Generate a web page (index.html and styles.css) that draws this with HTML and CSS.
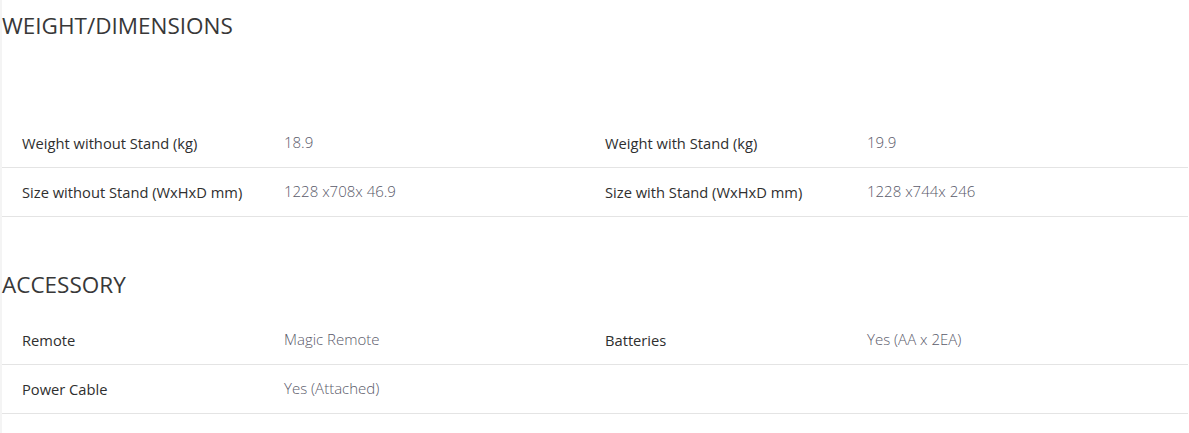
FILE: index.html
```html
<!DOCTYPE html>
<html lang="en">
<head>
<meta charset="utf-8">
<title>Specs</title>
<link rel="stylesheet" href="styles.css">
</head>
<body>
<div class="page">
  <section class="spec-section spec-section--first">
    <h2 class="spec-title">WEIGHT/DIMENSIONS</h2>
    <div class="spec-table spec-table--wide-gap">
      <div class="spec-row">
        <span class="spec-label">Weight without Stand (kg)</span>
        <span class="spec-value">18.9</span>
        <span class="spec-label">Weight with Stand (kg)</span>
        <span class="spec-value">19.9</span>
      </div>
      <div class="spec-row">
        <span class="spec-label">Size without Stand (WxHxD mm)</span>
        <span class="spec-value">1228 x708x 46.9</span>
        <span class="spec-label">Size with Stand (WxHxD mm)</span>
        <span class="spec-value">1228 x744x 246</span>
      </div>
    </div>
  </section>
  <section class="spec-section">
    <h2 class="spec-title">ACCESSORY</h2>
    <div class="spec-table">
      <div class="spec-row">
        <span class="spec-label">Remote</span>
        <span class="spec-value">Magic Remote</span>
        <span class="spec-label">Batteries</span>
        <span class="spec-value">Yes (AA x 2EA)</span>
      </div>
      <div class="spec-row">
        <span class="spec-label">Power Cable</span>
        <span class="spec-value">Yes (Attached)</span>
        <span class="spec-label"></span>
        <span class="spec-value"></span>
      </div>
    </div>
  </section>
</div>
</body>
</html>
```
FILE: styles.css
```css
html, body {
  margin: 0;
  padding: 0;
  background: #fff;
}
.page {
  border-left: 2px solid #f4f4f4;
  min-height: 433px;
  box-sizing: border-box;
  padding-right: 1px;
}
.spec-section {
  padding-top: 53px;
}
.spec-section--first {
  padding-top: 11px;
}
.spec-title {
  margin: 0;
  font-family: "Open Sans", sans-serif;
  font-weight: 400;
  font-size: 22.5px;
  line-height: 30px;
  color: #383838;
}
.spec-table {
  margin-top: 16px;
}
.spec-table--wide-gap {
  margin-top: 78px;
}
.spec-row {
  display: grid;
  grid-template-columns: 262px 321px 262px 1fr;
  align-items: center;
  height: 48px;
  padding-left: 20px;
  border-bottom: 1px solid #e4e4e4;
}
.spec-label {
  font-family: "Open Sans", sans-serif;
  font-size: 14.7px;
  color: #2f2f2f;
}
.spec-value {
  font-family: "Open Sans", sans-serif;
  font-weight: 300;
  font-size: 15px;
  color: #5a5a6a;
  padding-bottom: 3px;
}
```
